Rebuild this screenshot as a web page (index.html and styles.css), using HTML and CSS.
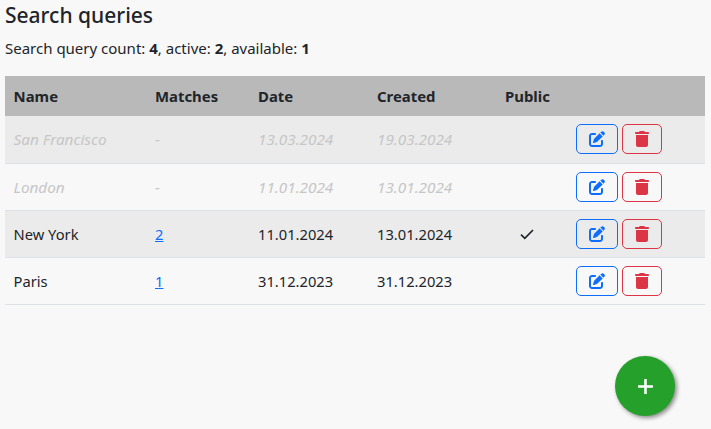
FILE: index.html
```html
<!DOCTYPE html>
<html lang="en">
<head>
<meta charset="utf-8">
<title>Search queries</title>
<link rel="stylesheet" href="styles.css">
</head>
<body>
<main class="page">
  <h1 class="title">Search queries</h1>
  <p class="summary">Search query count: <b>4</b>, active: <b>2</b>, available: <b>1</b></p>
  <table class="queries">
    <colgroup>
      <col class="c-name"><col class="c-matches"><col class="c-date"><col class="c-created"><col class="c-public"><col>
    </colgroup>
    <thead>
      <tr><th>Name</th><th>Matches</th><th>Date</th><th>Created</th><th>Public</th><th></th></tr>
    </thead>
    <tbody>
      <tr class="odd inactive">
        <td>San Francisco</td><td>-</td><td>13.03.2024</td><td>19.03.2024</td><td></td>
        <td class="actions"><button class="btn edit"><svg viewBox="0 0 512 512"><use href="#i-edit"/></svg></button><button class="btn del"><svg viewBox="0 0 448 512"><use href="#i-del"/></svg></button></td>
      </tr>
      <tr class="inactive">
        <td>London</td><td>-</td><td>11.01.2024</td><td>13.01.2024</td><td></td>
        <td class="actions"><button class="btn edit"><svg viewBox="0 0 512 512"><use href="#i-edit"/></svg></button><button class="btn del"><svg viewBox="0 0 448 512"><use href="#i-del"/></svg></button></td>
      </tr>
      <tr class="odd">
        <td>New York</td><td><a href="#">2</a></td><td>11.01.2024</td><td>13.01.2024</td>
        <td class="public"><svg class="check" viewBox="0 0 16 16"><path d="M2 8.6l3.8 3.8L14 4" fill="none" stroke="currentColor" stroke-width="1.7"/></svg></td>
        <td class="actions"><button class="btn edit"><svg viewBox="0 0 512 512"><use href="#i-edit"/></svg></button><button class="btn del"><svg viewBox="0 0 448 512"><use href="#i-del"/></svg></button></td>
      </tr>
      <tr>
        <td>Paris</td><td><a href="#">1</a></td><td>31.12.2023</td><td>31.12.2023</td><td></td>
        <td class="actions"><button class="btn edit"><svg viewBox="0 0 512 512"><use href="#i-edit"/></svg></button><button class="btn del"><svg viewBox="0 0 448 512"><use href="#i-del"/></svg></button></td>
      </tr>
    </tbody>
  </table>
</main>
<button class="fab" aria-label="Add"><svg viewBox="0 0 16 16"><path d="M8 1v14M1 8h14" stroke="currentColor" stroke-width="2.4" fill="none"/></svg></button>
<svg class="defs" aria-hidden="true">
  <defs>
    <path id="i-edit" fill="currentColor" d="M471.6 21.7c-21.9-21.9-57.3-21.9-79.2 0L362.3 51.7l97.9 97.9 30.1-30.1c21.9-21.9 21.9-57.3 0-79.2L471.6 21.7zm-299.2 220c-6.1 6.1-10.8 13.6-13.5 21.9l-29.6 88.8c-2.9 8.6-.6 18.1 5.8 24.6s15.9 8.7 24.6 5.8l88.8-29.6c8.2-2.7 15.7-7.4 21.9-13.5L437.7 172.3 339.7 74.3 172.4 241.7zM96 64C43 64 0 107 0 160V416c0 53 43 96 96 96H352c53 0 96-43 96-96V320c0-17.7-14.3-32-32-32s-32 14.3-32 32v96c0 17.7-14.3 32-32 32H96c-17.7 0-32-14.3-32-32V160c0-17.7 14.3-32 32-32h96c17.7 0 32-14.3 32-32s-14.3-32-32-32H96z"/>
    <path id="i-del" fill="currentColor" d="M135.2 17.7C140.6 6.8 151.7 0 163.8 0H284.2c12.1 0 23.2 6.8 28.6 17.7L320 32h96c17.7 0 32 14.3 32 32s-14.3 32-32 32H32C14.3 96 0 81.7 0 64S14.3 32 32 32h96l7.2-14.3zM32 128H416V448c0 35.3-28.7 64-64 64H96c-35.3 0-64-28.7-64-64V128z"/>
  </defs>
</svg>
</body>
</html>
```
FILE: styles.css
```css
* { box-sizing: border-box; }
html, body { height: 100%; }
body {
  margin: 0;
  background: #f8f8f8;
  color: #212529;
  font-family: "Noto Sans", "Open Sans", sans-serif;
  font-size: 15px;
  overflow: hidden;
  position: relative;
}
.page { padding: 0 6px 0 5px; }
.title {
  margin: 0;
  padding-top: 1px;
  height: 30px;
  font-size: 21px;
  line-height: 28px;
  font-weight: 500;
}
.summary {
  margin: 0;
  padding-top: 8px;
  font-size: 15px;
  line-height: 21px;
  height: 46px;
}
.summary b { font-weight: 700; }
.queries {
  width: 700px;
  border-collapse: collapse;
  table-layout: fixed;
}
.c-name { width: 141px; }
.c-matches { width: 103px; }
.c-date { width: 119px; }
.c-created { width: 128px; }
.c-public { width: 71px; }
.queries th {
  background: #b9b9b9;
  height: 40px;
  padding: 0 9px;
  text-align: left;
  font-weight: 700;
  font-size: 14.9px;
}
.queries td {
  height: 47px;
  padding: 0 9px;
  border-bottom: 1px solid #dee2e6;
  font-size: 14.7px;
}
.queries td:first-child, .queries th:first-child { padding-left: 8.6px; }
.odd td { background: #ebebeb; }
.queries .inactive td { color: #c6c6c6; font-style: italic; font-size: 15.3px; }
.queries a { color: #0d6efd; }
.queries .public { padding-left: 23px; }
.check { display: block; width: 16px; height: 16px; }
.queries .actions { padding: 0 0 0 9px; }
.actions { white-space: nowrap; }
.btn {
  height: 30px;
  padding: 0;
  background: transparent;
  border: 1px solid;
  border-radius: 5px;
  vertical-align: middle;
  display: inline-flex;
  align-items: center;
  justify-content: center;
}
.btn svg { width: 16px; height: 16px; display: block; }
.edit { width: 42px; color: #0d6efd; margin-right: 4px; }
.del { width: 40px; color: #dc3545; }
.fab {
  position: absolute;
  left: 615px;
  top: 356px;
  width: 60px;
  height: 60px;
  border: 0;
  padding: 0;
  border-radius: 50%;
  background: #25a02a;
  color: #fff;
  box-shadow: 2px 2px 4px rgba(0,0,0,.45);
  display: flex;
  align-items: center;
  justify-content: center;
}
.fab svg { width: 17px; height: 17px; display: block; }
.defs { position: absolute; width: 0; height: 0; }
```
